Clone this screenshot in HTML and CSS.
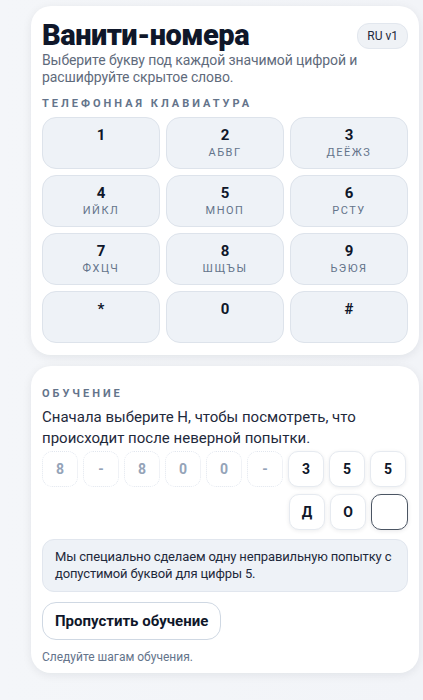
FILE: index.html
```html
<!DOCTYPE html>
<html lang="ru">
<head>
<meta charset="utf-8">
<link rel="stylesheet" href="styles.css">
</head>
<body>
<main class="page">
  <section class="card card-main">
    <header class="head">
      <h1 class="title">Ванити-номера</h1>
      <span class="badge">RU v1</span>
      <p class="subtitle">Выберите букву под каждой значимой цифрой и расшифруйте скрытое слово.</p>
    </header>
    <h2 class="label">Телефонная клавиатура</h2>
    <div class="keypad">
      <button class="key"><span class="digit">1</span><span class="letters"></span></button>
      <button class="key"><span class="digit">2</span><span class="letters">АБВГ</span></button>
      <button class="key"><span class="digit">3</span><span class="letters">ДЕЁЖЗ</span></button>
      <button class="key"><span class="digit">4</span><span class="letters">ИЙКЛ</span></button>
      <button class="key"><span class="digit">5</span><span class="letters">МНОП</span></button>
      <button class="key"><span class="digit">6</span><span class="letters">РСТУ</span></button>
      <button class="key"><span class="digit">7</span><span class="letters">ФХЦЧ</span></button>
      <button class="key"><span class="digit">8</span><span class="letters">ШЩЪЫ</span></button>
      <button class="key"><span class="digit">9</span><span class="letters">ЬЭЮЯ</span></button>
      <button class="key"><span class="digit">*</span><span class="letters"></span></button>
      <button class="key"><span class="digit">0</span><span class="letters"></span></button>
      <button class="key"><span class="digit">#</span><span class="letters"></span></button>
    </div>
  </section>

  <section class="card card-tutorial">
    <h2 class="label label-tight">Обучение</h2>
    <p class="lead">Сначала выберите Н, чтобы посмотреть, что происходит после неверной попытки.</p>
    <div class="slots">
      <span class="slot ghost">8</span>
      <span class="slot ghost">-</span>
      <span class="slot ghost">8</span>
      <span class="slot ghost">0</span>
      <span class="slot ghost">0</span>
      <span class="slot ghost">-</span>
      <span class="slot solid">3</span>
      <span class="slot solid">5</span>
      <span class="slot solid">5</span>
    </div>
    <div class="slots slots-answer">
      <span class="slot solid">Д</span>
      <span class="slot solid">О</span>
      <span class="slot active"></span>
    </div>
    <div class="note">Мы специально сделаем одну неправильную попытку с допустимой буквой для цифры 5.</div>
    <button class="skip">Пропустить обучение</button>
    <p class="hint">Следуйте шагам обучения.</p>
  </section>
</main>
</body>
</html>
```
FILE: styles.css
```css
* { box-sizing: border-box; }
html, body { margin: 0; }
body {
  background: linear-gradient(90deg, #f4f6f9 0%, #f2f4f8 100%);
  font-family: Roboto, "Noto Sans", sans-serif;
  color: #0f172a;
  width: 423px;
  height: 700px;
  overflow: hidden;
}
.page {
  display: flex;
  flex-direction: column;
  gap: 11px;
  padding: 6px 4px 0 31px;
}
.card {
  background: #fff;
  border-radius: 20px;
  box-shadow: 0 2px 10px rgba(15, 23, 42, 0.08);
  padding: 12px 11px 12px 11px;
  width: 388px;
}
.card-tutorial { padding-bottom: 8px; }
.head {
  display: grid;
  grid-template-columns: 1fr auto;
  align-items: start;
}
.title {
  margin: 0;
  font-size: 29px;
  font-weight: 900;
  line-height: 34px;
  letter-spacing: -0.5px;
  color: #0f172a;
}
.subtitle {
  grid-column: 1 / -1;
  max-width: 322px;
  margin: 0;
  font-size: 14px;
  line-height: 17px;
  letter-spacing: -0.1px;
  color: #5f6b7c;
}
.badge {
  margin-top: 5px;
  font-size: 12px;
  line-height: 16px;
  padding: 4px 9px;
  border-radius: 12px;
  background: #eff2f6;
  border: 1px solid #e2e7ee;
  color: #1e293b;
  white-space: nowrap;
}
.label {
  margin: 10px 0 6px;
  font-size: 11px;
  font-weight: 700;
  letter-spacing: 3px;
  text-transform: uppercase;
  color: #64748b;
  line-height: 15px;
}
.label-tight { margin-top: 8px; }
.keypad {
  display: grid;
  grid-template-columns: repeat(3, 1fr);
  gap: 6px 6px;
}
.key {
  height: 52px;
  border-radius: 14px;
  background: #eef2f7;
  border: 1px solid #dde3eb;
  font-family: inherit;
  display: flex;
  flex-direction: column;
  align-items: center;
  justify-content: flex-start;
  padding: 8px 0 0;
  gap: 1px;
}
.digit {
  font-size: 15px;
  font-weight: 700;
  color: #0f172a;
  line-height: 18px;
}
.letters {
  font-size: 11px;
  letter-spacing: 1.5px;
  color: #64748b;
  line-height: 16px;
}
.lead {
  margin: 0 0 2px;
  font-size: 15px;
  line-height: 21px;
  color: #1e293b;
}
.slots {
  display: flex;
  gap: 5px;
}
.slots-answer {
  justify-content: flex-end;
  margin-top: 7px;
}
.slot {
  width: 36px;
  height: 36px;
  border-radius: 10px;
  display: flex;
  align-items: center;
  justify-content: center;
  font-size: 14px;
  font-weight: 700;
}
.ghost {
  border: 1px dotted #e1e6ee;
  color: #94a3b8;
}
.solid {
  background: #fff;
  border: 1px solid #e6eaf0;
  box-shadow: 0 1px 4px rgba(15, 23, 42, 0.08);
  color: #0f172a;
}
.active {
  width: 37px;
  border: 1.5px solid #4b5563;
  background: #fff;
  box-shadow: 0 1px 4px rgba(15, 23, 42, 0.1);
}
.note {
  margin-top: 9px;
  background: #eef2f7;
  border: 1px solid #e1e6ee;
  border-radius: 12px;
  padding: 8px 12px 9px;
  font-size: 13px;
  letter-spacing: -0.15px;
  line-height: 17px;
  color: #1e293b;
}
.skip {
  margin-top: 10px;
  font-family: inherit;
  font-size: 15px;
  font-weight: 700;
  color: #0f172a;
  background: #fff;
  border: 1px solid #cfd8e3;
  border-radius: 14px;
  padding: 0 12px;
  height: 38px;
}
.hint {
  margin: 9px 0 0;
  font-size: 12px;
  line-height: 16px;
  color: #64748b;
}
```
